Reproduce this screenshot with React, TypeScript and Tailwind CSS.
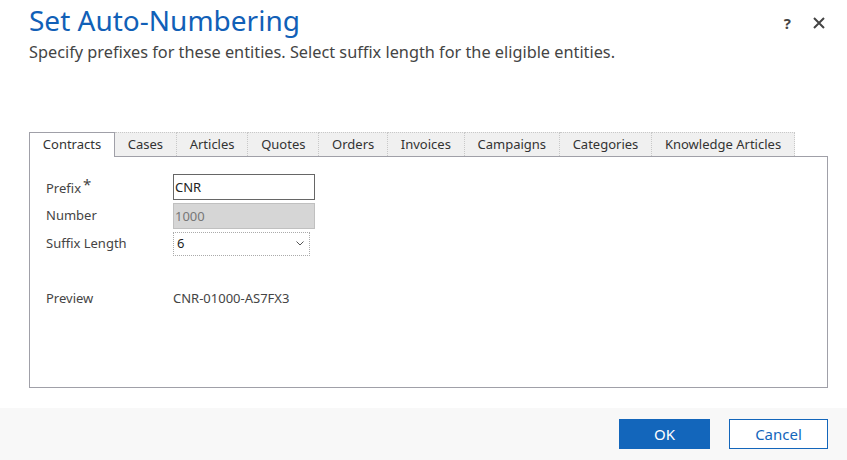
import React, { useState } from 'react';

const tabs = [
  'Contracts',
  'Cases',
  'Articles',
  'Quotes',
  'Orders',
  'Invoices',
  'Campaigns',
  'Categories',
  'Knowledge Articles',
];

const App: React.FC = () => {
  const [active, setActive] = useState<string>('Contracts');
  const [prefix, setPrefix] = useState<string>('CNR');
  const [suffix, setSuffix] = useState<string>('6');

  return (
    <div
      className="w-[847px] h-[460px] bg-white flex flex-col text-[#444]"
      style={{ fontFamily: '"Noto Sans", "Open Sans", sans-serif' }}
    >
      <div className="flex-1 pl-[29px] pr-[19px] pt-[1px]">
        <div className="flex items-start justify-between">
          <h1 className="text-[28px] leading-[38px] text-[#1160b7]">Set Auto-Numbering</h1>
          <div className="flex items-center gap-[22px] pt-[11px] pr-[3px] text-[#444]">
            <span className="text-[15px] font-bold">?</span>
            <svg width="12" height="12" viewBox="0 0 12 12">
              <path d="M1 1 L11 11 M11 1 L1 11" stroke="#444" strokeWidth="2" />
            </svg>
          </div>
        </div>
        <p className="text-[16.3px] leading-[22px] mt-[2px]">
          Specify prefixes for these entities. Select suffix length for the eligible entities.
        </p>

        <div className="mt-[69px] flex items-end h-[24px]">
          {tabs.map((t) => (
            <button
              key={t}
              onClick={() => setActive(t)}
              className={
                t === active
                  ? 'h-[25px] px-[12.8px] text-[13px] bg-white border border-[#a0a0a8] border-b-0 -mb-px relative z-10 text-[#333]'
                  : 'h-[24px] px-[12.8px] text-[13px] bg-[#f0f0f0] border-t border-r border-dotted border-[#c8c8c8] text-[#333]'
              }
            >
              {t}
            </button>
          ))}
        </div>
        <div className="border border-[#a0a0a8] h-[232px] pt-[17px] pl-[16px] text-[13px]">
          <div className="flex items-center h-[26px]">
            <span className="w-[127px] text-[#444]">
              Prefix<span className="text-[15px] relative -top-[3px] ml-[2px]">*</span>
            </span>
            <input
              value={prefix}
              onChange={(e) => setPrefix(e.target.value)}
              className="w-[142px] h-[26px] border border-[#666] px-[1px] text-[13px] text-[#222] outline-none"
            />
          </div>
          <div className="flex items-center h-[26px] mt-[3px]">
            <span className="w-[127px]">Number</span>
            <input
              value="1000"
              disabled
              className="w-[142px] h-[26px] border border-[#c0c0c0] bg-[#d6d6d6] px-[1px] text-[13px] text-[#777]"
            />
          </div>
          <div className="flex items-center h-[24px] mt-[3px]">
            <span className="w-[127px]">Suffix Length</span>
            <div className="relative w-[137px] h-[24px]">
              <select
                value={suffix}
                onChange={(e) => setSuffix(e.target.value)}
                className="appearance-none w-full h-full border border-dotted border-[#aaa] pl-[3px] text-[13px] text-[#222] bg-white outline-none"
              >
                {['4', '5', '6', '7', '8'].map((n) => (
                  <option key={n} value={n}>
                    {n}
                  </option>
                ))}
              </select>
              <svg
                className="absolute right-[6px] top-[9px] pointer-events-none"
                width="8"
                height="5"
                viewBox="0 0 8 5"
              >
                <path d="M0.5 0.5 L4 4 L7.5 0.5" stroke="#555" fill="none" strokeWidth="1" />
              </svg>
            </div>
          </div>
          <div className="flex items-center mt-[33px]">
            <span className="w-[127px]">Preview</span>
            <span>CNR-01000-AS7FX3</span>
          </div>
        </div>
      </div>
      <div className="h-[52px] bg-[#f8f8f8] flex items-center justify-end gap-[19px] pr-[19px]">
        <button className="w-[91px] h-[30px] bg-[#1366bb] text-white text-[15px]">OK</button>
        <button className="w-[99px] h-[30px] bg-white border border-[#1366bb] text-[#1366bb] text-[15px]">
          Cancel
        </button>
      </div>
    </div>
  );
};

export default App;
